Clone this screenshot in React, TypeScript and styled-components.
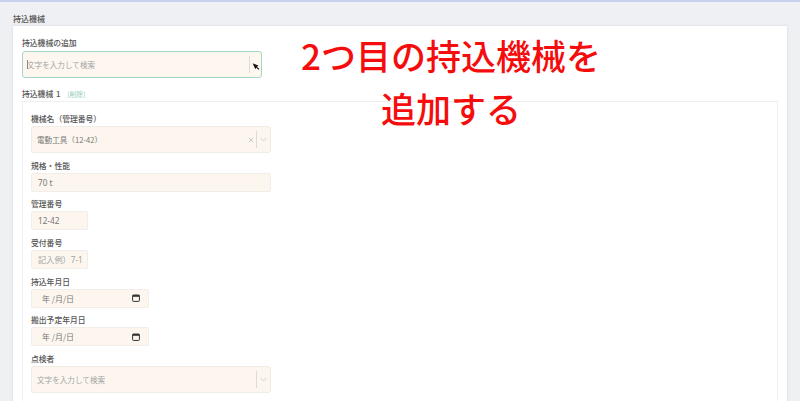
import React from "react";
import styled, { createGlobalStyle } from "styled-components";

const GlobalStyle = createGlobalStyle`
  html, body {
    margin: 0;
    height: 401px;
    overflow: hidden;
    background: #eff0f3;
    font-family: "Noto Sans CJK JP", "Noto Sans", sans-serif;
  }
`;

export default function App() {
  return (
    <Page>
      <GlobalStyle />
      <TopBar />
      <SectionTitle>持込機械</SectionTitle>
      <Card>
        <Label>持込機械の追加</Label>
        <AddSelect>
          <Caret />
          <SelectText $muted>文字を入力して検索</SelectText>
          <Divider />
          <Cursor viewBox="0 0 12 12">
            <path d="M1 1l9 4-2.6 1.2L11 9.6 9.6 11 6.2 7.4 5 10z" fill="#111" />
          </Cursor>
        </AddSelect>
        <MachineHeading>
          持込機械 1 <DeleteLink>[削除]</DeleteLink>
        </MachineHeading>
        <MachineBox>
          <Field>
            <FieldLabel>機械名（管理番号）</FieldLabel>
            <SelectBox>
              <SelectText>電動工具（12-42）</SelectText>
              <ClearIcon viewBox="0 0 8 8">
                <path d="M1 1l6 6M7 1L1 7" stroke="#c4c4c4" strokeWidth="1.2" />
              </ClearIcon>
              <Divider />
              <Chevron />
            </SelectBox>
          </Field>
          <Field>
            <FieldLabel>規格・性能</FieldLabel>
            <TextInput $width={240} readOnly value="70 t" />
          </Field>
          <Field>
            <FieldLabel>管理番号</FieldLabel>
            <TextInput $width={57} readOnly value="12-42" />
          </Field>
          <Field>
            <FieldLabel>受付番号</FieldLabel>
            <TextInput $width={57} readOnly placeholder="記入例）7-1" />
          </Field>
          <Field>
            <FieldLabel>持込年月日</FieldLabel>
            <DateBox />
          </Field>
          <Field>
            <FieldLabel>搬出予定年月日</FieldLabel>
            <DateBox />
          </Field>
          <Field>
            <FieldLabel>点検者</FieldLabel>
            <SelectBox>
              <SelectText $muted>文字を入力して検索</SelectText>
              <Divider />
              <Chevron />
            </SelectBox>
          </Field>
        </MachineBox>
      </Card>
      <Annotation>
        <div>2つ目の持込機械を</div>
        <div>追加する</div>
      </Annotation>
    </Page>
  );
}

function Chevron() {
  return (
    <ChevronIcon viewBox="0 0 10 6">
      <path d="M1 1l4 4 4-4" fill="none" stroke="#c4c4c4" strokeWidth="1.1" />
    </ChevronIcon>
  );
}

function DateBox() {
  return (
    <DateField>
      <DateText>年 /月/日</DateText>
      <svg width="8" height="8" viewBox="0 0 8 8">
        <rect x="0.6" y="1" width="6.8" height="6.4" rx="0.8" fill="none" stroke="#333" strokeWidth="1" />
        <rect x="0.6" y="1" width="6.8" height="1.8" fill="#333" />
      </svg>
    </DateField>
  );
}

const Page = styled.div`
  position: relative;
  height: 401px;
  overflow: hidden;
  background: #eff0f3;
  color: #555;
`;

const TopBar = styled.div`
  height: 2px;
  background: #c7d2ec;
`;

const SectionTitle = styled.div`
  padding: 12px 0 0 13px;
  height: 12px;
  font-size: 8px;
  line-height: 10px;
  font-weight: 500;
  color: #555;
`;

const Card = styled.div`
  margin: 0 13px;
  padding: 12px 9px 0;
  height: 400px;
  box-sizing: border-box;
  background: #fff;
  box-shadow: 0 0 3px rgba(0, 0, 0, 0.1);
`;

const Label = styled.div`
  height: 10px;
  margin-bottom: 3px;
  font-size: 7.8px;
  line-height: 10px;
  font-weight: 500;
  color: #555;
`;

const FieldLabel = styled(Label)`
  height: 11px;
  margin-bottom: 2px;
  line-height: 12px;
`;

const AddSelect = styled.div`
  display: flex;
  align-items: center;
  width: 240px;
  height: 27px;
  box-sizing: border-box;
  padding-left: 4px;
  background: #fdf7f0;
  border: 1px solid #a6d6c6;
  border-radius: 3px;
`;

const Caret = styled.span`
  width: 1px;
  height: 9px;
  margin-right: -1px;
  background: #888;
`;

const SelectText = styled.span<{ $muted?: boolean }>`
  flex: 1;
  font-size: 7.6px;
  color: ${(p) => (p.$muted ? "#a5a5a5" : "#777")};
`;

const Divider = styled.span`
  width: 1px;
  height: 17px;
  background: #dedbd6;
`;

const Cursor = styled.svg`
  width: 8px;
  height: 9px;
  margin: 3px 1px 0 2px;
`;

const MachineHeading = styled.div`
  margin-top: 11px;
  height: 12px;
  font-size: 7.8px;
  line-height: 10px;
  font-weight: 500;
  word-spacing: 1px;
  color: #555;
`;

const DeleteLink = styled.span`
  margin-left: 4px;
  font-size: 6.8px;
  font-weight: 400;
  color: #8fcdb8;
`;

const MachineBox = styled.div`
  display: flex;
  flex-direction: column;
  gap: 6.7px;
  height: 300px;
  padding: 11px 8px 0;
  border: 1px solid #eeeff1;
  border-bottom: none;
`;

const Field = styled.div`
  display: flex;
  flex-direction: column;
  align-items: flex-start;
`;

const SelectBox = styled.div`
  display: flex;
  align-items: center;
  width: 240px;
  height: 27px;
  box-sizing: border-box;
  padding-left: 5px;
  background: #fcf6ee;
  border: 1px solid #efece6;
  border-radius: 3px;
`;

const ClearIcon = styled.svg`
  width: 6px;
  height: 6px;
  margin-right: 2px;
`;

const ChevronIcon = styled.svg`
  width: 7px;
  height: 5px;
  margin: 0 3px;
`;

const TextInput = styled.input<{ $width: number }>`
  width: ${(p) => p.$width}px;
  height: 19px;
  box-sizing: border-box;
  padding: 0 1px 0 6px;
  font-family: "Noto Sans", "Noto Sans CJK JP", sans-serif;
  font-size: 8.2px;
  color: #777;
  background: #fcf6ee;
  border: 1px solid #f1eee9;
  border-radius: 2px;
  outline: none;

  &::placeholder {
    color: #a5a5a5;
  }
`;

const DateField = styled.div`
  display: flex;
  align-items: center;
  justify-content: space-between;
  width: 118px;
  height: 19px;
  box-sizing: border-box;
  padding: 0 8px 0 10px;
  background: #fcf6ee;
  border: 1px solid #f1eee9;
  border-radius: 2px;
`;

const DateText = styled.span`
  font-size: 8px;
  color: #777;
`;

const Annotation = styled.div`
  position: absolute;
  left: 251px;
  top: 28px;
  width: 400px;
  text-align: center;
  font-size: 35px;
  line-height: 53px;
  font-weight: 500;
  color: #f50d0d;
`;
